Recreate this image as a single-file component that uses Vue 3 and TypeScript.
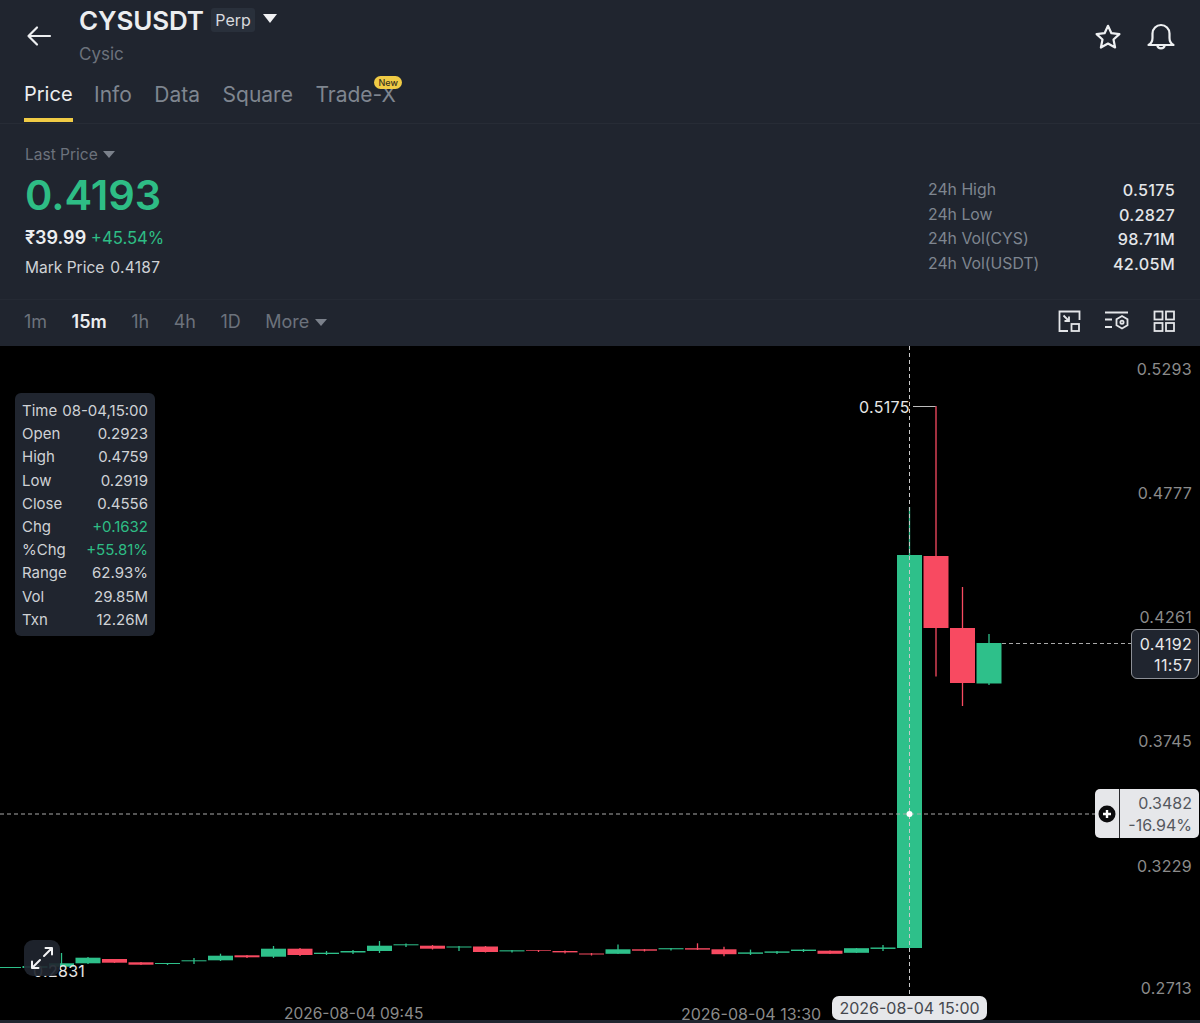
<script setup lang="ts">
type Candle = { x: number; top: number; bottom: number; high: number; low: number; up: boolean }

const tabs = ['Price', 'Info', 'Data', 'Square', 'Trade-X']
const intervals = ['1m', '15m', '1h', '4h', '1D']
const stats = [
  ['24h High', '0.5175'],
  ['24h Low', '0.2827'],
  ['24h Vol(CYS)', '98.71M'],
  ['24h Vol(USDT)', '42.05M'],
]
const ohlc = [
  ['Open', '0.2923'],
  ['High', '0.4759'],
  ['Low', '0.2919'],
  ['Close', '0.4556'],
  ['Chg', '+0.1632', 'up'],
  ['%Chg', '+55.81%', 'up'],
  ['Range', '62.93%'],
  ['Vol', '29.85M'],
  ['Txn', '12.26M'],
]
const axis = [
  ['0.5293', 369],
  ['0.4777', 493],
  ['0.4261', 617],
  ['0.3745', 741],
  ['0.3229', 866],
  ['0.2713', 988],
] as const

// n = slots left of the big candle, [top, bottom, high, low, up]
const small: [number, number, number, number, number, boolean][] = [
  [34, 967, 968, 967, 968, true],
  [33, 966, 968, 965, 969, true],
  [32, 963.3, 966.7, 953, 967, true],
  [31, 957.7, 963.3, 957, 964, true],
  [30, 959, 962.7, 959, 963, false],
  [29, 962.3, 964.7, 962, 965, false],
  [28, 963, 964, 963, 965, true],
  [27, 960.3, 961.3, 958, 964, true],
  [26, 955.7, 960.3, 953.7, 961, true],
  [25, 955.3, 957.3, 955, 958, false],
  [24, 948.7, 956.7, 946, 958, true],
  [23, 948.7, 955, 948, 956, false],
  [22, 952.7, 954, 951, 955, true],
  [21, 951, 952.5, 950, 954, true],
  [20, 945.7, 951, 941, 953, true],
  [19, 944.3, 945.3, 943.5, 947, true],
  [18, 945.7, 948.7, 945, 949.5, false],
  [17, 946.5, 947.5, 946, 951, true],
  [16, 946.5, 952, 946, 952.5, false],
  [15, 950.3, 951.4, 950, 952.5, true],
  [14, 950.3, 951, 950, 952, false],
  [13, 951, 952.4, 950.5, 953.5, false],
  [12, 953.5, 954.5, 953, 955.5, false],
  [11, 949.3, 953.8, 944.4, 954, true],
  [10, 949.3, 950.7, 949, 951.5, false],
  [9, 948.2, 949.3, 948, 950.5, true],
  [8, 948.2, 949.6, 943.3, 950, false],
  [7, 949.3, 954.2, 946.8, 956.3, false],
  [6, 952.4, 953.8, 949.6, 955, true],
  [5, 951.4, 952.8, 951, 954, true],
  [4, 949.6, 951, 949, 952, true],
  [3, 950.7, 953.8, 950.5, 954, false],
  [2, 948.2, 952.8, 948, 953, true],
  [1, 947.5, 948.9, 945, 951, true],
  [0, 555, 948, 507, 948, true],
  [-1, 556, 628, 406, 676.5, false],
  [-2, 628, 683, 587, 706, false],
  [-3, 643, 683.5, 634, 685, true],
]
const chartTop = 346
const candles: Candle[] = small.map(([n, top, bottom, high, low, up]) => ({
  x: 909.5 - n * 26.5,
  top: top - chartTop,
  bottom: bottom - chartTop,
  high: high - chartTop,
  low: low - chartTop,
  up,
}))
</script>

<template>
  <div class="page">
    <header class="head">
      <div class="top">
        <svg class="back" width="26" height="22" viewBox="0 0 26 22" fill="none" stroke="#eceef0" stroke-width="2.2" stroke-linecap="round" stroke-linejoin="round">
          <path d="M24 11H2.500M11 2.500L2.500 11l8.500 8.500" />
        </svg>
        <div class="name">
          <div class="symbol">
            <span class="ticker">CYSUSDT</span>
            <span class="perp">Perp</span>
            <i class="caret caret-white"></i>
          </div>
          <div class="sub">Cysic</div>
        </div>
        <div class="top-icons">
          <svg width="28" height="28" viewBox="0 0 28 28" fill="none" stroke="#eef0f2" stroke-width="2.2" stroke-linejoin="round">
            <path d="M14 2.800l3.400 7.400 8 .9-5.900 5.400 1.600 8L14 20.500l-7.100 4 1.600-8-5.900-5.400 8-.9z" />
          </svg>
          <svg width="30" height="30" viewBox="0 0 30 30" fill="none" stroke="#eef0f2" stroke-width="2.2" stroke-linejoin="round" stroke-linecap="round">
            <path d="M2.500 23c2.800-1.600 4-3.800 4-7V11.500a8.500 8.500 0 0 1 17 0V16c0 3.200 1.200 5.400 4 7z" />
            <path d="M11.200 23.300a3.900 3.900 0 0 0 7.600 0" />
          </svg>
        </div>
      </div>

      <nav class="tabs">
        <div v-for="(t, i) in tabs" :key="t" class="tab" :class="{ active: i === 0 }">
          {{ t }}
          <span v-if="t === 'Trade-X'" class="new">New</span>
        </div>
      </nav>

      <section class="stats">
        <div class="price-col">
          <div class="last">Last Price <i class="caret caret-grey"></i></div>
          <div class="price">0.4193</div>
          <div class="fiat"><b>₹39.99</b> <span class="green">+45.54%</span></div>
          <div class="mark"><span>Mark Price</span><span class="num">0.4187</span></div>
        </div>
        <div class="day-col">
          <div v-for="s in stats" :key="s[0]" class="day-row">
            <span>{{ s[0] }}</span><b class="num">{{ s[1] }}</b>
          </div>
        </div>
      </section>

      <div class="intervals">
        <span v-for="iv in intervals" :key="iv" class="iv" :class="{ on: iv === '15m' }">{{ iv }}</span>
        <span class="iv more">More <i class="caret caret-grey"></i></span>
        <div class="tools">
          <svg width="24" height="24" viewBox="0 0 24 24" fill="none" stroke="#e4e6e9" stroke-width="1.8">
            <path d="M11 22H2.500V2.500H22.500V11" />
            <path d="M6.500 6.500L12 12M12 7.500V12H7.500" />
            <rect x="14.500" y="15" width="7.500" height="7" />
          </svg>
          <svg width="26" height="24" viewBox="0 0 26 24" fill="none" stroke="#e4e6e9" stroke-width="1.8">
            <path d="M1 3.500H24M1 10.500H8M1 18H8" />
            <path d="M18 7l5.500 3.200v6.100L18 19.500l-5.500-3.200v-6.100z" />
            <circle cx="18" cy="13.200" r="1.600" />
          </svg>
          <svg width="24" height="24" viewBox="0 0 24 24" fill="none" stroke="#e4e6e9" stroke-width="1.8">
            <rect x="2.500" y="2.500" width="8" height="8" />
            <rect x="14" y="2.500" width="8" height="8" />
            <rect x="2.500" y="14" width="8" height="8" />
            <rect x="14" y="14" width="8" height="8" />
          </svg>
        </div>
      </div>
    </header>

    <section class="chart">
      <svg class="plot" width="1200" height="674" viewBox="0 0 1200 674">
        <g v-for="c in candles" :key="c.x">
          <line :x1="c.x" :x2="c.x" :y1="c.high" :y2="c.low" :stroke="c.up ? '#2ec08a' : '#f84a61'" stroke-width="1.300" />
          <rect :x="c.x - 12.500" :y="c.top" width="25" :height="c.bottom - c.top" :fill="c.up ? '#2ec08a' : '#f84a61'" />
        </g>
        <path d="M909.500 0V650" stroke="#c9c9c9" stroke-width="1" stroke-dasharray="4 3" />
        <path d="M0 468H1095" stroke="#a9a9a9" stroke-width="1" stroke-dasharray="4 3" />
        <path d="M1002 297.500H1131" stroke="#a9a9a9" stroke-width="1" stroke-dasharray="4 3" />
        <path d="M913 60.500H935.500" stroke="#bdbdbd" stroke-width="1" />
        <circle cx="909.500" cy="468" r="3" fill="#fff" />
      </svg>

      <div v-for="a in axis" :key="a[0]" class="axis num" :style="{ top: a[1] - chartTop - 10 + 'px' }">{{ a[0] }}</div>

      <div class="hi num">0.5175</div>
      <div class="lo num">0.2831</div>

      <div class="tip">
        <div class="tip-row"><span>Time</span><span>08-04,15:00</span></div>
        <div v-for="r in ohlc" :key="r[0]" class="tip-row">
          <span>{{ r[0] }}</span><span :class="{ green: r[2] === 'up' }">{{ r[1] }}</span>
        </div>
      </div>

      <div class="now num">
        <span>0.4192</span>
        <span>11:57</span>
      </div>

      <div class="cross">
        <div class="cross-add">
          <svg width="18" height="18" viewBox="0 0 18 18">
            <circle cx="9" cy="9" r="8.500" fill="#0b0b0d" />
            <path d="M9 5v8M5 9h8" stroke="#fff" stroke-width="2.400" />
          </svg>
        </div>
        <div class="cross-val">
          <span>0.3482</span>
          <span>-16.94%</span>
        </div>
      </div>

      <div class="expand">
        <svg width="26" height="26" viewBox="0 0 26 26" fill="none" stroke="#f2f3f5" stroke-width="2" stroke-linecap="round" stroke-linejoin="round">
          <path d="M15 11l8-8M16.500 3H23v6.500M11 15l-8 8M3 16.500V23h6.500" />
        </svg>
      </div>

      <div class="time t1">2026-08-04 09:45</div>
      <div class="time t2">2026-08-04 13:30</div>
      <div class="time-now">2026-08-04 15:00</div>
    </section>
  </div>
</template>

<style scoped>
.page {
  position: relative;
  width: 1200px;
  height: 1023px;
  overflow: hidden;
  background: #20252f;
  color: #eceef0;
  font-family: Inter, "Liberation Sans", sans-serif;
}
.num {
  letter-spacing: 0.3px;
}
.head {
  height: 346px;
  display: flex;
  flex-direction: column;
}
.top {
  display: flex;
  align-items: flex-start;
  flex: none;
  height: 82px;
  padding: 0 24px 0 26px;
  box-sizing: border-box;
}
.back {
  margin-top: 25px;
  margin-right: 27px;
}
.name {
  flex: 1;
  padding-top: 5px;
}
.symbol {
  display: flex;
  align-items: center;
  gap: 7px;
  height: 30px;
}
.ticker {
  font-size: 26px;
  font-weight: 600;
  letter-spacing: -0.15px;
}
.perp {
  height: 24px;
  box-sizing: border-box;
  font-size: 16px;
  line-height: 24px;
  padding: 0 4.500px;
  border-radius: 3px;
  background: #29303b;
  color: #d8dade;
}
.caret {
  display: inline-block;
  width: 0;
  height: 0;
  border-left: 6px solid transparent;
  border-right: 6px solid transparent;
}
.caret-white {
  border-left-width: 7px;
  border-right-width: 7px;
  border-top: 9px solid #f0f1f3;
  margin: 0 0 4px 1px;
}
.caret-grey {
  border-top: 7px solid #7b818b;
  margin: 0 0 2px 1px;
}
.sub {
  margin-top: 9px;
  font-size: 17px;
  color: #6c727c;
}
.top-icons {
  display: flex;
  align-items: center;
  gap: 24px;
  padding-top: 22px;
}
.tabs {
  display: flex;
  flex: none;
  gap: 22.500px;
  height: 42px;
  box-sizing: border-box;
  padding: 0 24px;
  border-bottom: 1px solid #272c36;
}
.tab {
  position: relative;
  height: 40px;
  box-sizing: border-box;
  font-size: 21px;
  line-height: 25px;
  color: #7f8690;
}
.tab.active {
  margin-right: -1px;
  font-size: 20px;
  color: #eceef0;
  border-bottom: 4px solid #f0cb45;
}
.new {
  position: absolute;
  top: -6px;
  right: -6px;
  padding: 0 4px;
  height: 13px;
  border-radius: 7px;
  font-size: 9px;
  line-height: 13px;
  font-weight: 500;
  background: #f0cb45;
  color: #3a3320;
}
.stats {
  display: flex;
  flex: none;
  justify-content: space-between;
  height: 176px;
  box-sizing: border-box;
  padding: 21px 25px 0;
  border-bottom: 1px solid #252a34;
}
.last {
  font-size: 15.500px;
  line-height: 20px;
  color: #6c727c;
}
.price {
  margin-top: 6px;
  font-size: 41.500px;
  line-height: 48px;
  font-weight: 600;
  color: #2ebd85;
}
.fiat {
  margin-top: 7px;
  font-size: 16.700px;
  line-height: 24px;
}
.fiat b {
  font-weight: 600;
  font-size: 18px;
}
.green {
  color: #2ebd85;
}
.mark {
  display: flex;
  gap: 6px;
  margin-top: 8px;
  font-size: 15.500px;
  line-height: 20px;
  color: #cfd2d6;
}
.day-col {
  width: 247px;
  padding-top: 33px;
}
.day-row {
  display: flex;
  justify-content: space-between;
  height: 24.600px;
  line-height: 24.600px;
  font-size: 15.800px;
  color: #7f8690;
}
.day-row b {
  font-size: 16.200px;
  font-weight: 500;
  color: #e4e6e9;
}
.intervals {
  flex: 1;
  display: flex;
  align-items: center;
  gap: 24.500px;
  padding: 0 24px 4px 24px;
  font-size: 18px;
  color: #6c727c;
}
.iv.on {
  color: #eceef0;
  font-weight: 600;
}
.tools {
  margin-left: auto;
  display: flex;
  align-items: center;
  gap: 22.500px;
}
.chart {
  position: relative;
  height: 674px;
  background: #000;
}
.plot {
  position: absolute;
  left: 0;
  top: 0;
}
.axis {
  position: absolute;
  right: 8px;
  font-size: 16px;
  line-height: 20px;
  color: #8b8b8b;
}
.hi,
.lo {
  position: absolute;
  font-size: 16px;
  line-height: 20px;
  color: #e6e6e6;
}
.hi {
  left: 859px;
  top: 51px;
}
.lo {
  left: 33px;
  top: 615px;
}
.tip {
  position: absolute;
  left: 15px;
  top: 47px;
  width: 140px;
  height: 243px;
  box-sizing: border-box;
  padding: 6px 7px;
  border-radius: 6px;
  background: #20252f;
  font-size: 15px;
  color: #cfd2d6;
}
.tip-row {
  display: flex;
  justify-content: space-between;
  height: 23.200px;
  line-height: 23.200px;
}
.now {
  position: absolute;
  left: 1131px;
  top: 283px;
  width: 68px;
  height: 50px;
  box-sizing: border-box;
  display: flex;
  flex-direction: column;
  align-items: flex-end;
  justify-content: center;
  padding: 2px 6px 0 0;
  border: 1px solid #8d9097;
  border-radius: 6px;
  background: #20252f;
  font-size: 16px;
  line-height: 21px;
  color: #e8e9eb;
}
.cross {
  position: absolute;
  left: 1095px;
  top: 443px;
  width: 104px;
  height: 49px;
  display: flex;
  border-radius: 5px;
  overflow: hidden;
  background: #e6e7ea;
}
.cross-add {
  width: 25px;
  display: flex;
  align-items: center;
  justify-content: center;
  border-right: 1.500px solid #2a2a2e;
  box-sizing: border-box;
}
.cross-val {
  flex: 1;
  display: flex;
  flex-direction: column;
  align-items: flex-end;
  justify-content: center;
  padding-right: 7px;
  font-size: 16px;
  line-height: 22px;
  color: #55585e;
}
.expand {
  position: absolute;
  left: 24px;
  top: 594px;
  width: 36px;
  height: 36px;
  display: flex;
  align-items: center;
  justify-content: center;
  border-radius: 9px;
  background: rgba(32, 37, 47, 0.92);
}
.time {
  position: absolute;
  top: 660px;
  font-size: 15.500px;
  line-height: 16px;
  color: #8b8b8b;
}
.t1 {
  left: 284px;
}
.t2 {
  left: 681px;
  font-size: 16px;
}
.time-now {
  position: absolute;
  left: 832px;
  top: 650px;
  width: 155px;
  height: 24px;
  border-radius: 7px;
  background: #e6e7ea;
  text-align: center;
  font-size: 16px;
  line-height: 24px;
  color: #45484e;
}
</style>
